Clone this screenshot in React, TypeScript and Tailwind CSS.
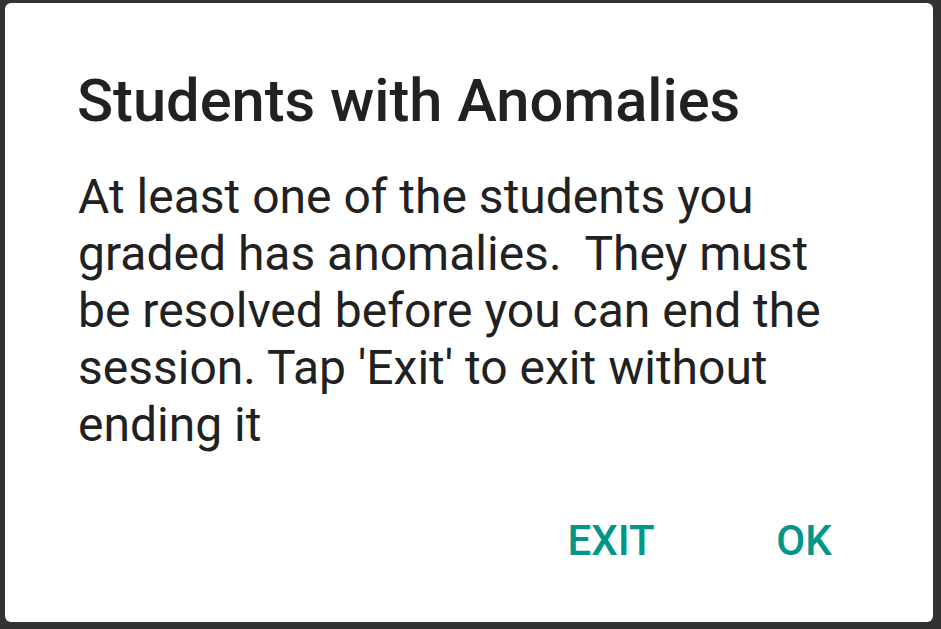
import React from 'react';

export default function App() {
  return (
    <div className="w-[941px] h-[629px] bg-[#323232] pl-[5px] pt-[3px] font-[Roboto,sans-serif]">
      <div className="w-[928px] h-[619px] bg-white rounded-[6px] flex flex-col pt-[63px]">
        <div className="px-[73px]">
          <h1 className="-ml-[1px] text-[59.6px] leading-[70px] font-medium text-[#212121]">
            Students with Anomalies
          </h1>
          <p className="mt-[32px] text-[48px] leading-[57px] text-[#212121] whitespace-pre-wrap">
            At least one of the students you
            <br />
            graded has anomalies.  They must
            <br />
            be resolved before you can end the
            <br />
            session. Tap 'Exit' to exit without
            <br />
            ending it
          </p>
        </div>
        <div className="mt-[63px] flex justify-end pr-[33px] gap-[1px]">
          <button className="w-[192px] text-center text-[42px] leading-[50px] font-medium text-[#009688]">
            EXIT
          </button>
          <button className="w-[192px] text-center text-[42px] leading-[50px] font-medium text-[#009688]">
            OK
          </button>
        </div>
      </div>
    </div>
  );
}
